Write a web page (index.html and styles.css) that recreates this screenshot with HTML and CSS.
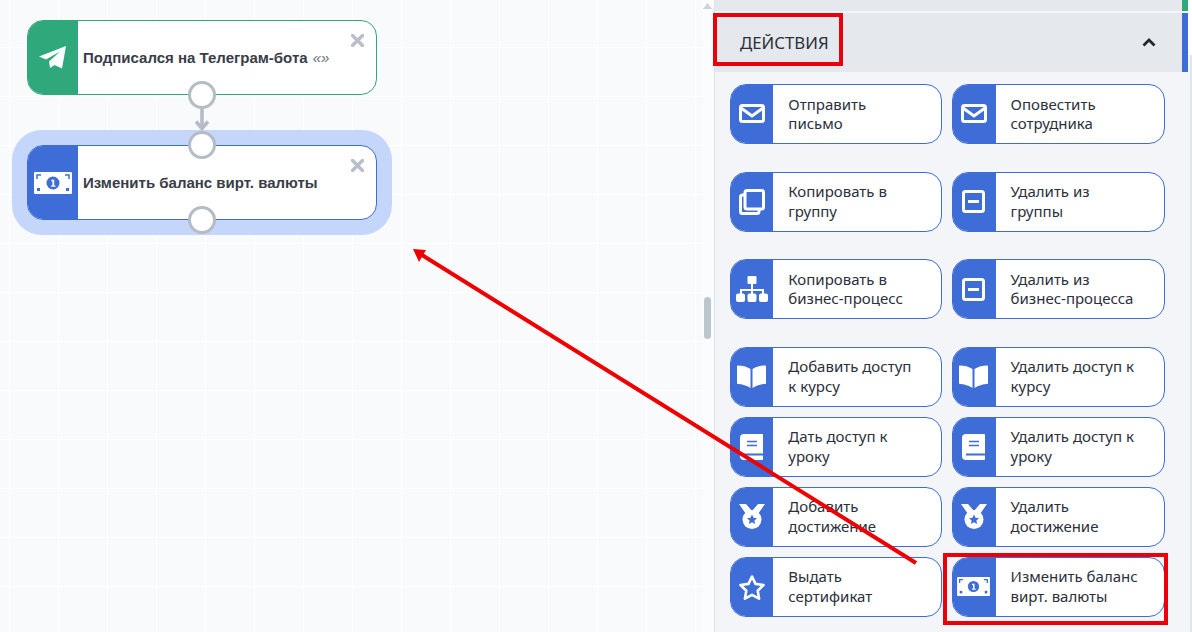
FILE: index.html
```html
<!DOCTYPE html>
<html lang="ru">
<head>
<meta charset="utf-8">
<title>Процесс</title>
<link rel="stylesheet" href="styles.css">
</head>
<body>
<svg class="defs" width="0" height="0" aria-hidden="true">
  <symbol id="i-mail" viewBox="0 0 26 20"><rect x="1.500" y="1.500" width="23" height="16" rx="2" fill="none" stroke="#fff" stroke-width="3"/><path d="M2 4l11 8 11-8" fill="none" stroke="#fff" stroke-width="3"/></symbol>
  <symbol id="i-copy" viewBox="0 0 26 26"><rect x="6" y="1.500" width="18.500" height="18.500" rx="2" fill="none" stroke="#fff" stroke-width="3"/><path d="M6 6H3.500a2 2 0 0 0-2 2v14.500a2 2 0 0 0 2 2H18a2 2 0 0 0 2-2V20" fill="none" stroke="#fff" stroke-width="3"/></symbol>
  <symbol id="i-minus" viewBox="0 0 23 23"><rect x="1.500" y="1.500" width="20" height="20" rx="2" fill="none" stroke="#fff" stroke-width="3"/><rect x="6" y="10" width="11" height="3" fill="#fff"/></symbol>
  <symbol id="i-tree" viewBox="0 0 32 26"><rect x="11.500" y="0" width="9" height="8" rx="1" fill="#fff"/><path d="M16 8v6M5 18v-4h22v4M16 14v4" fill="none" stroke="#fff" stroke-width="2"/><rect x="0" y="17.500" width="9" height="8.500" rx="2" fill="#fff"/><rect x="11.500" y="17.500" width="9" height="8.500" rx="2" fill="#fff"/><rect x="23" y="17.500" width="9" height="8.500" rx="2" fill="#fff"/></symbol>
  <symbol id="i-open" viewBox="0 0 29 23"><path d="M13.500 4C10 1.500 5 .5 1 .5c-.6 0-1 .4-1 1V18c0 .6.4 1 1 1 4.500.2 8.500 1.500 12.500 4z" fill="#fff"/><path d="M15.500 4C19 1.500 24 .5 28 .5c.6 0 1 .4 1 1V18c0 .6-.4 1-1 1-4.500.2-8.500 1.500-12.500 4z" fill="#fff"/></symbol>
  <symbol id="i-book" viewBox="0 0 23 26"><path d="M4 0h18c.6 0 1 .4 1 1v24c0 .6-.4 1-1 1H4a4 4 0 0 1-4-4V4a4 4 0 0 1 4-4z" fill="#fff"/><path d="M7 7.500h10M7 11.500h10" stroke="#3e6dd8" stroke-width="1.500"/><path d="M4 20.500h19" stroke="#3e6dd8" stroke-width="2"/></symbol>
  <symbol id="i-medal" viewBox="0 0 26 25"><path d="M0 0h7l6 7 6-7h7l-7 10H7z" fill="#fff"/><circle cx="13" cy="15.500" r="9.500" fill="#fff"/><path d="M13 10.500l1.500 3.300 3.500.4-2.600 2.400.7 3.500-3.100-1.800-3.100 1.800.7-3.500L8 14.200l3.500-.4z" fill="#3e6dd8"/></symbol>
  <symbol id="i-star" viewBox="0 0 28 26"><path d="M14 2.500l3.500 7.400 8 1.100-5.800 5.700 1.400 8L14 20.900l-7.100 3.800 1.400-8L2.500 11l8-1.100z" fill="none" stroke="#fff" stroke-width="2.600" stroke-linejoin="round"/></symbol>
  <symbol id="i-money" viewBox="0 0 38 22"><rect width="38" height="22" rx="1" fill="#fff"/><path d="M3 7V3h4M35 7V3h-4" fill="none" stroke="#3e6dd8" stroke-width="1.500"/><rect x="3" y="16" width="3" height="3" fill="#3e6dd8"/><rect x="32" y="16" width="3" height="3" fill="#3e6dd8"/><circle cx="19" cy="11" r="6.500" fill="#3e6dd8"/><path d="M17.300 7.800h2.900v5.700h1.300v1.300h-4.400v-1.300h1.300v-4.300h-1.100z" fill="#fff"/></symbol>
  <symbol id="i-close" viewBox="0 0 13 13"><path d="M1.500 1.500l10 10M11.500 1.500l-10 10" stroke="#b8bfc8" stroke-width="3.400" stroke-linecap="square"/></symbol>
</svg>

<main class="app">
  <section class="canvas">
    <div class="halo"></div>

    <article class="node node-green node-first">
      <div class="node-icon">
        <svg class="plane" viewBox="0 0 27 23"><path d="M27 0L23 22.500 15.500 19 11 22 10 15.500 21 5.500 7 13.500 0 10.500z" fill="#fff"/></svg>
      </div>
      <div class="node-title">Подписался на Телеграм-бота <em>«»</em></div>
      <svg class="node-close"><use href="#i-close"/></svg>
    </article>

    <svg class="link" viewBox="0 0 16 24"><path d="M8 0v22M2 14.500l6 7 6-7" fill="none" stroke="#b5bcc5" stroke-width="3.600"/></svg>

    <article class="node node-blue node-second">
      <div class="node-icon"><svg class="money-large"><use href="#i-money"/></svg></div>
      <div class="node-title">Изменить баланс вирт. валюты</div>
      <svg class="node-close"><use href="#i-close"/></svg>
    </article>

    <span class="port port-a"></span>
    <span class="port port-b"></span>
    <span class="port port-c"></span>
  </section>

  <div class="rail">
    <svg class="rail-up" viewBox="0 0 9 6"><path d="M4.500 0L9 6H0z" fill="#cdd3d9"/></svg>
    <div class="rail-thumb"></div>
  </div>

  <aside class="panel">
    <div class="strip"><span class="strip-mark strip-green"></span></div>
    <header class="panel-head">
      <h2 class="panel-title">ДЕЙСТВИЯ</h2>
      <svg class="chevron" viewBox="0 0 14 9"><path d="M1.500 7.500L7 2l5.500 5.500" fill="none" stroke="#22262e" stroke-width="2.800"/></svg>
      <span class="strip-mark strip-blue"></span>
    </header>
    <div class="actions">
      <a class="card loose"><span class="card-icon"><svg class="ic-mail"><use href="#i-mail"/></svg></span><span class="card-text">Отправить<br>письмо</span></a>
      <a class="card loose"><span class="card-icon"><svg class="ic-mail"><use href="#i-mail"/></svg></span><span class="card-text">Оповестить<br>сотрудника</span></a>
      <a class="card loose"><span class="card-icon"><svg class="ic-copy"><use href="#i-copy"/></svg></span><span class="card-text">Копировать в<br>группу</span></a>
      <a class="card loose"><span class="card-icon"><svg class="ic-minus"><use href="#i-minus"/></svg></span><span class="card-text">Удалить из<br>группы</span></a>
      <a class="card loose"><span class="card-icon"><svg class="ic-tree"><use href="#i-tree"/></svg></span><span class="card-text">Копировать в<br>бизнес-процесс</span></a>
      <a class="card loose"><span class="card-icon"><svg class="ic-minus"><use href="#i-minus"/></svg></span><span class="card-text">Удалить из<br>бизнес-процесса</span></a>
      <a class="card"><span class="card-icon"><svg class="ic-open"><use href="#i-open"/></svg></span><span class="card-text">Добавить доступ<br>к курсу</span></a>
      <a class="card"><span class="card-icon"><svg class="ic-open"><use href="#i-open"/></svg></span><span class="card-text">Удалить доступ к<br>курсу</span></a>
      <a class="card"><span class="card-icon"><svg class="ic-book"><use href="#i-book"/></svg></span><span class="card-text">Дать доступ к<br>уроку</span></a>
      <a class="card"><span class="card-icon"><svg class="ic-book"><use href="#i-book"/></svg></span><span class="card-text">Удалить доступ к<br>уроку</span></a>
      <a class="card"><span class="card-icon"><svg class="ic-medal"><use href="#i-medal"/></svg></span><span class="card-text">Добавить<br>достижение</span></a>
      <a class="card"><span class="card-icon"><svg class="ic-medal"><use href="#i-medal"/></svg></span><span class="card-text">Удалить<br>достижение</span></a>
      <a class="card"><span class="card-icon"><svg class="ic-star"><use href="#i-star"/></svg></span><span class="card-text">Выдать<br>сертификат</span></a>
      <a class="card"><span class="card-icon"><svg class="ic-money"><use href="#i-money"/></svg></span><span class="card-text">Изменить баланс<br>вирт. валюты</span></a>
    </div>
  </aside>
</main>

<svg class="marks" viewBox="0 0 1192 632">
  <rect x="715" y="15" width="126" height="49" fill="none" stroke="#ea0008" stroke-width="4"/>
  <rect x="945" y="555" width="221" height="68" fill="none" stroke="#ea0008" stroke-width="4"/>
  <path d="M916 563L422 255" fill="none" stroke="#ee0000" stroke-width="4"/>
  <path d="M413 249L426 250 419 262z" fill="#ee0000"/>
</svg>
</body>
</html>
```
FILE: styles.css
```css
* { box-sizing: border-box; }
html, body { margin: 0; height: 100%; }
body {
  position: relative;
  width: 1192px;
  height: 632px;
  overflow: hidden;
  background: #fff;
  font-family: "Noto Sans", "Open Sans", sans-serif;
}
.defs { position: absolute; }
.app { display: flex; width: 1192px; height: 632px; }

/* canvas */
.canvas {
  position: relative;
  width: 703px;
  flex: none;
  background-color: #f9fafc;
  background-image:
    linear-gradient(#ffffff 1px, transparent 1px),
    linear-gradient(90deg, #ffffff 1px, transparent 1px);
  background-size: 49px 49px;
  background-position: 9px 47px;
}
.halo {
  position: absolute;
  left: 12px;
  top: 130px;
  width: 380px;
  height: 105px;
  border-radius: 30px;
  background: #c5d6fb;
}
.node {
  position: absolute;
  left: 27px;
  width: 350px;
  height: 75px;
  display: flex;
  align-items: center;
  background: #fff;
  border: 1px solid;
  border-radius: 16px;
  overflow: hidden;
}
.node-first { top: 20px; }
.node-second { top: 145px; }
.node-green { border-color: #2fa97c; }
.node-blue { border-color: #3e6dd8; }
.node-icon {
  align-self: stretch;
  width: 51px;
  margin: -1px 0 -1px -1px;
  flex: none;
  display: flex;
  align-items: center;
  justify-content: center;
}
.node-green .node-icon { background: #2fa97c; }
.node-blue .node-icon { background: #3e6dd8; }
.plane { width: 27px; height: 23px; }
.money-large { width: 38px; height: 22px; }
.node-title {
  margin-left: 5px;
  font: bold 15px/18px "Liberation Sans", Arial, sans-serif;
  color: #383d48;
}
.node-title em { font-weight: normal; font-style: italic; color: #6a707a; margin-left: 1px; }
.node-close {
  position: absolute;
  top: 13px;
  right: 12px;
  width: 13px;
  height: 13px;
}
.port {
  position: absolute;
  left: 188px;
  width: 28px;
  height: 28px;
  border-radius: 50%;
  background: #fff;
  border: 3px solid #b5bcc5;
}
.port-a { top: 81px; }
.port-b { top: 131px; }
.port-c { top: 206px; }
.link {
  position: absolute;
  left: 194px;
  top: 107px;
  width: 16px;
  height: 24px;
}

/* scroll rail */
.rail {
  position: relative;
  width: 11px;
  flex: none;
  background: #fbfcfd;
}
.rail-up { position: absolute; left: 0; top: 3px; width: 9px; height: 6px; }
.rail-thumb {
  position: absolute;
  left: 1px;
  top: 297px;
  width: 7px;
  height: 42px;
  border-radius: 4px;
  background: #bcc6ce;
}

/* panel */
.panel {
  position: relative;
  flex: 1;
  display: flex;
  flex-direction: column;
  background: #f3f5f8;
  border-left: 1px solid #dfe3e8;
}
.panel::before {
  content: "";
  position: absolute;
  right: 0;
  top: 0;
  width: 4px;
  height: 55px;
  background: #fff;
}
.panel::after {
  content: "";
  position: absolute;
  right: 0;
  top: 55px;
  bottom: 0;
  width: 2px;
  background: #e2e5e9;
}
.strip {
  height: 11px;
  flex: none;
  background: #e5e8ec;
  margin-bottom: 2px;
  margin-right: 4px;
  position: relative;
}
.panel-head {
  height: 59px;
  flex: none;
  position: relative;
  display: flex;
  align-items: center;
  justify-content: space-between;
  background: #e5e8ec;
  margin-right: 4px;
  padding: 0 32px 0 25px;
}
.strip-mark { position: absolute; right: 0; top: 0; bottom: 0; width: 6px; }
.strip-green { background: #2fa97c; }
.strip-blue { background: #3e6dd8; }
.panel-title {
  margin: 0;
  font-size: 16.800px;
  font-weight: 400;
  color: #2b303a;
}
.chevron { width: 14px; height: 9px; }

.actions {
  padding: 12px 0 0 15px;
  display: grid;
  grid-template-columns: 212.300px 212.700px;
  column-gap: 10px;
  row-gap: 10px;
}
.card {
  height: 60px;
  display: flex;
  align-items: center;
  background: #fff;
  border: 1px solid #3e6dd8;
  border-radius: 16px;
  overflow: hidden;
  color: #2b303a;
}
.card.loose { margin-bottom: 17.500px; }
.card-icon {
  align-self: stretch;
  width: 43.300px;
  margin: -1px 0 -1px -1px;
  flex: none;
  display: flex;
  align-items: center;
  justify-content: center;
  background: #3e6dd8;
}
.card-text {
  margin-left: 15px;
  font-size: 15px;
  line-height: 19.500px;
  white-space: nowrap;
}
.ic-mail { width: 26px; height: 20px; }
.ic-copy { width: 26px; height: 26px; }
.ic-minus { width: 23px; height: 23px; }
.ic-tree { width: 32px; height: 26px; }
.ic-open { width: 29px; height: 23px; }
.ic-book { width: 23px; height: 26px; }
.ic-medal { width: 26px; height: 25px; }
.ic-star { width: 28px; height: 26px; }
.ic-money { width: 33px; height: 19px; }

/* annotation overlay */
.marks {
  position: absolute;
  left: 0;
  top: 0;
  width: 1192px;
  height: 632px;
  pointer-events: none;
}
```
